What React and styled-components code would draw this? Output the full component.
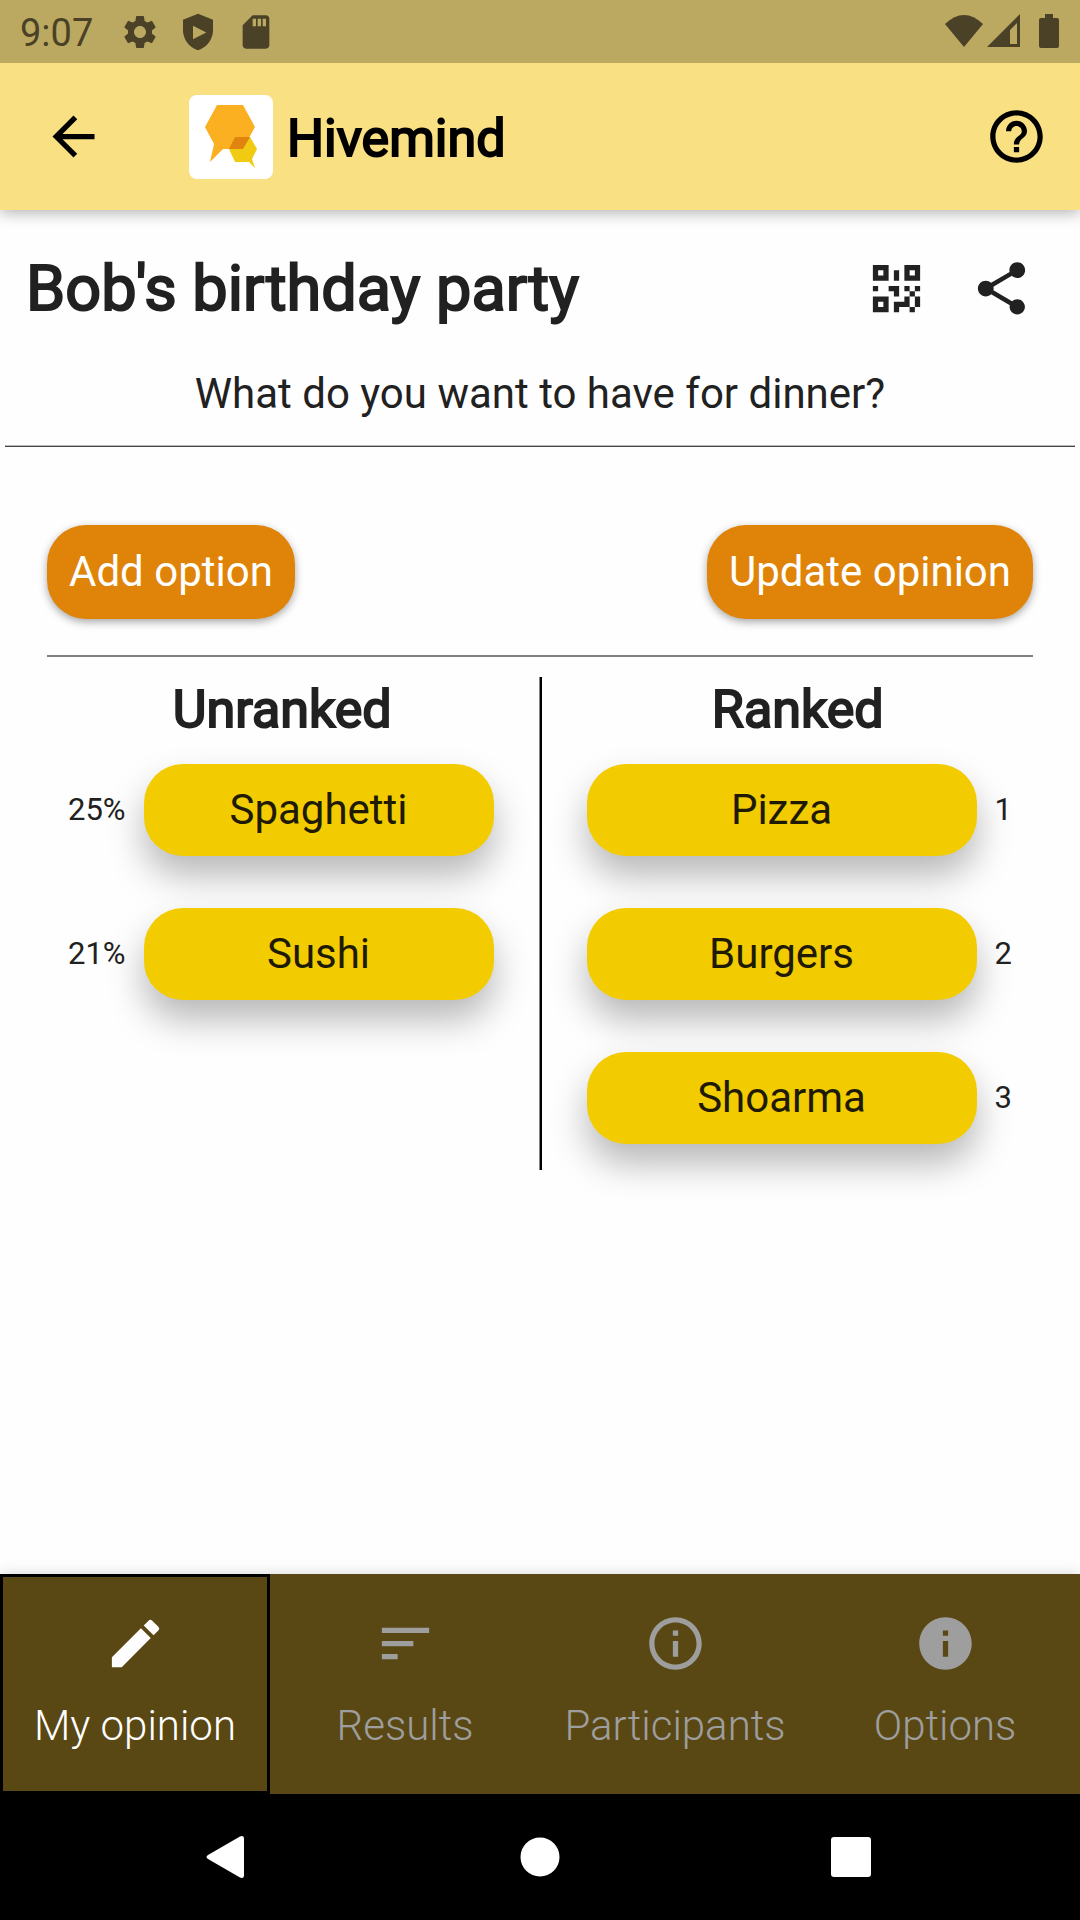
import React from "react";
import styled, { createGlobalStyle } from "styled-components";
import {
  MdArrowBack,
  MdEdit,
  MdHelpOutline,
  MdInfo,
  MdInfoOutline,
  MdSettings,
  MdShare,
  MdSort,
} from "react-icons/md";

const GlobalStyle = createGlobalStyle`
  * { box-sizing: border-box; }
  body { margin: 0; background: #fefefe; font-family: Roboto, "Liberation Sans", sans-serif; color: #212121; }
  button, a { font: inherit; color: inherit; }
  svg { display: block; flex: none; }
`;

const Screen = styled.div`
  min-height: 100vh;
  display: flex;
  flex-direction: column;
`;

const StatusBar = styled.div`
  position: relative;
  z-index: 1;
  height: 63px;
  padding: 0 20px;
  display: flex;
  align-items: center;
  background: #bba962;
  color: #4a4127;
`;

const Clock = styled.time`
  width: 100px;
  padding-top: 2px;
  font-size: 38px;
  line-height: 42px;
`;

const StatusIcons = styled.div`
  display: flex;
  align-items: center;
  gap: 18px;
`;

const SignalIcons = styled.div`
  margin-left: auto;
  display: flex;
  align-items: center;
`;

const AppBar = styled.header`
  height: 147px;
  padding: 0 32px 0 42px;
  display: flex;
  align-items: center;
  background: #f9e082;
  color: #000;
  box-shadow: 0 3px 14px rgba(0, 0, 0, 0.3);
`;

const IconButton = styled.button`
  padding: 0;
  border: 0;
  background: none;
  display: flex;
  cursor: pointer;
`;

const Brand = styled.div`
  flex: 1;
  margin-left: 84px;
  display: flex;
  align-items: center;
  gap: 14px;
`;

const LogoTile = styled.div`
  width: 84px;
  height: 84px;
  border-radius: 8px;
  overflow: hidden;
  background: #fff;
`;

const BrandName = styled.span`
  padding-top: 4px;
  font-size: 52px;
  line-height: 62px;
  -webkit-text-stroke: 2px currentColor;
`;

const Main = styled.main`
  flex: 1;
`;

const Intro = styled.section`
  margin: 0 5px;
  padding: 42px 42px 27px 21px;
  border-bottom: 1px solid #444;
  box-shadow: inset 0 -1px #bbb;
`;

const TitleRow = styled.div`
  display: flex;
  align-items: center;
  justify-content: space-between;
`;

const Title = styled.h1`
  margin: 0;
  font-size: 63px;
  line-height: 74px;
  font-weight: 400;
  -webkit-text-stroke: 2px currentColor;
`;

const TitleActions = styled.div`
  display: flex;
  gap: 42px;
  padding-bottom: 2px;
`;

const Question = styled.p`
  margin: 43px -21px 0 0;
  font-size: 42px;
  line-height: 50px;
  text-align: center;
`;

const Board = styled.section`
  padding: 78px 47px 0;
`;

const ButtonRow = styled.div`
  display: flex;
  justify-content: space-between;
  padding-bottom: 36px;
  border-bottom: 2px solid #808080;
`;

const ActionButton = styled.button`
  height: 94px;
  padding: 0 22px;
  border: 0;
  border-radius: 39px;
  background: #df8408;
  color: #fff;
  font-size: 42px;
  line-height: 50px;
  cursor: pointer;
  box-shadow: 0 3px 8px rgba(0, 0, 0, 0.35);
`;

const Columns = styled.div`
  display: grid;
  grid-template-columns: 1fr 3px 1fr;
  column-gap: 21px;
  margin-top: 20px;
`;

const Divider = styled.div`
  background: #000;
  border-left: 1px solid #808080;
`;

const Column = styled.section`
  padding-bottom: 26px;
`;

const ColumnTitle = styled.h2`
  margin: 0;
  font-size: 52px;
  line-height: 66px;
  font-weight: 400;
  text-align: center;
  -webkit-text-stroke: 2px currentColor;
`;

const OptionList = styled.ul`
  margin: 21px 0 0;
  padding: 0;
  list-style: none;
  display: flex;
  flex-direction: column;
  gap: 52px;
`;

const OptionRow = styled.li`
  display: flex;
  align-items: center;
  gap: 18px;
  padding: ${(p) => (p.$ranked ? "0 21px 0 24px" : "0 24px 0 21px")};
  font-size: 31px;
  line-height: 38px;
`;

const OptionPill = styled.button`
  flex: 1;
  height: 92px;
  padding: 0;
  border: 0;
  border-radius: 39px;
  background: #f2cc00;
  color: #1f1a04;
  font-size: 42px;
  line-height: 50px;
  cursor: grab;
  box-shadow: 0 20px 36px rgba(0, 0, 0, 0.28);
`;

const Tabs = styled.nav`
  height: 220px;
  display: grid;
  grid-template-columns: repeat(4, 1fr);
  background: #594814;
  box-shadow: 0 0 14px rgba(0, 0, 0, 0.15);
`;

const Tab = styled.a`
  display: flex;
  flex-direction: column;
  align-items: center;
  justify-content: center;
  gap: 26px;
  padding-bottom: 6px;
  border: 3px solid ${(p) => (p.$active ? "#000" : "transparent")};
  && { color: ${(p) => (p.$active ? "#fff" : "#9e9e9e")}; }
  font-size: 42px;
  line-height: 50px;
  font-weight: 300;
  text-decoration: none;
`;

const SystemBar = styled.div`
  height: 126px;
  display: flex;
  align-items: center;
  justify-content: center;
  gap: 263px;
  background: #000;
  color: #fff;
`;

const Logo = () => (
  <svg width="84" height="84" viewBox="0 0 84 84" aria-hidden="true">
    <path d="M28 10H54L66 32L54 54H34L21 67L25 49L16 32Z" fill="#fab020" />
    <path d="M46 42H61L68 54L63 64L66 73L60 67H46L40 54Z" fill="#f1cb11" />
    <path d="M46 42H61L54 54H40Z" fill="#e0830f" />
  </svg>
);

const ShieldIcon = () => (
  <svg width="40" height="40" viewBox="0 0 24 24" fill="currentColor" aria-hidden="true">
    <path fillRule="evenodd" d="M12 1L3 4.600V11c0 5.500 3.800 10.400 9 12c5.200-1.600 9-6.500 9-12V4.600ZM9 8.200L17 12.300L9 16.400Z" />
  </svg>
);

const SdCardIcon = () => (
  <svg width="40" height="40" viewBox="0 0 24 24" fill="currentColor" aria-hidden="true">
    <path fillRule="evenodd" d="M18 2h-8L4 8v12c0 1.100.9 2 2 2h12c1.100 0 2-.9 2-2V4c0-1.100-.9-2-2-2zM10 4h2v4.500h-2zM13 4h2v4.500h-2zM16 4h2v4.500h-2z" />
  </svg>
);

const SignalGroup = () => (
  <svg width="116" height="40" viewBox="0 0 116 40" fill="currentColor" aria-hidden="true">
    <path d="M1 12Q20 -6 39 12L20 35Z" />
    <path fillRule="evenodd" d="M43 35L76 2V35ZM66 18V32H73V11Z" />
    <path d="M101 2h8v4h4q2 0 2 2v26q0 2-2 2H97q-2 0-2-2V8q0-2 2-2h4Z" />
  </svg>
);

const QrIcon = () => (
  <svg width="63" height="63" viewBox="0 0 24 24" fill="currentColor" aria-hidden="true">
    <path
      fillRule="evenodd"
      d="M3 3h6v6H3zM5 5v2h2V5zM15 3h6v6h-6zM17 5v2h2V5zM3 15h6v6H3zM5 17v2h2v-2zM11 5h2v4h-2zM3 11h2v2H3zM9 11h4v4h-2v-2H9zM15 11h2v2h-2zM19 11h2v2h-2zM17 13h2v2h-2zM15 15h2v4h-4v2h-2v-4h4zM19 15h2v4h-2zM17 19h2v2h-2z"
    />
  </svg>
);

const unranked = [
  { name: "Spaghetti", share: "25%" },
  { name: "Sushi", share: "21%" },
];

const ranked = ["Pizza", "Burgers", "Shoarma"];

const tabs = [
  { label: "My opinion", Icon: MdEdit, active: true },
  { label: "Results", Icon: MdSort },
  { label: "Participants", Icon: MdInfoOutline },
  { label: "Options", Icon: MdInfo },
];

export default function App() {
  return (
    <Screen>
      <GlobalStyle />
      <StatusBar>
        <Clock>9:07</Clock>
        <StatusIcons>
          <MdSettings size={40} />
          <ShieldIcon />
          <SdCardIcon />
        </StatusIcons>
        <SignalIcons>
          <SignalGroup />
        </SignalIcons>
      </StatusBar>
      <AppBar>
        <IconButton aria-label="Back">
          <MdArrowBack size={63} />
        </IconButton>
        <Brand>
          <LogoTile>
            <Logo />
          </LogoTile>
          <BrandName>Hivemind</BrandName>
        </Brand>
        <IconButton aria-label="Help">
          <MdHelpOutline size={63} />
        </IconButton>
      </AppBar>
      <Main>
        <Intro>
          <TitleRow>
            <Title>Bob's birthday party</Title>
            <TitleActions>
              <IconButton aria-label="Show QR code">
                <QrIcon />
              </IconButton>
              <IconButton aria-label="Share">
                <MdShare size={63} />
              </IconButton>
            </TitleActions>
          </TitleRow>
          <Question>What do you want to have for dinner?</Question>
        </Intro>
        <Board>
          <ButtonRow>
            <ActionButton>Add option</ActionButton>
            <ActionButton>Update opinion</ActionButton>
          </ButtonRow>
          <Columns>
            <Column>
              <ColumnTitle>Unranked</ColumnTitle>
              <OptionList>
                {unranked.map((o) => (
                  <OptionRow key={o.name}>
                    <span>{o.share}</span>
                    <OptionPill>{o.name}</OptionPill>
                  </OptionRow>
                ))}
              </OptionList>
            </Column>
            <Divider />
            <Column>
              <ColumnTitle>Ranked</ColumnTitle>
              <OptionList>
                {ranked.map((name, i) => (
                  <OptionRow key={name} $ranked>
                    <OptionPill>{name}</OptionPill>
                    <span>{i + 1}</span>
                  </OptionRow>
                ))}
              </OptionList>
            </Column>
          </Columns>
        </Board>
      </Main>
      <Tabs>
        {tabs.map(({ label, Icon, active }) => (
          <Tab key={label} href="#" $active={active}>
            <Icon size={63} />
            {label}
          </Tab>
        ))}
      </Tabs>
      <SystemBar>
        <IconButton aria-label="System back">
          <svg width="48" height="48" viewBox="0 0 48 48" fill="currentColor">
            <path d="M3 22L35 3.500Q39 2 39 6V42Q39 46 35 44.500L3 26Q0 24 3 22Z" />
          </svg>
        </IconButton>
        <IconButton aria-label="Home">
          <svg width="48" height="48" viewBox="0 0 48 48" fill="currentColor">
            <circle cx="24" cy="24" r="19.500" />
          </svg>
        </IconButton>
        <IconButton aria-label="Recent apps">
          <svg width="48" height="48" viewBox="0 0 48 48" fill="currentColor">
            <rect x="4" y="4" width="40" height="40" rx="3" />
          </svg>
        </IconButton>
      </SystemBar>
    </Screen>
  );
}
